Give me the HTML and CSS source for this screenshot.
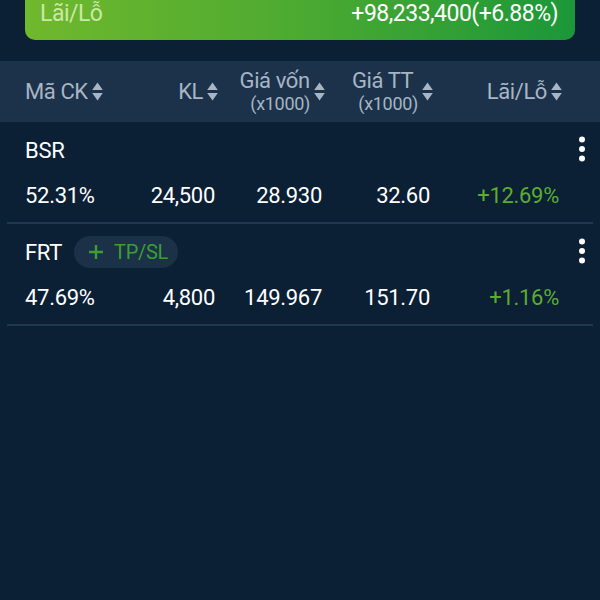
FILE: index.html
```html
<!DOCTYPE html>
<html lang="vi">
<head>
<meta charset="utf-8">
<title>Danh mục</title>
<link rel="stylesheet" href="styles.css">
</head>
<body>
<div class="banner">
  <span class="banner-label">Lãi/Lỗ</span>
  <span class="banner-value">+98,233,400(+6.88%)</span>
</div>

<div class="thead">
  <div class="th th-left"><span>Mã CK</span><svg class="sort" viewBox="0 0 11 19"><path d="M5.5 0.5 L10.8 8 H0.2 Z"/><path d="M5.5 18.5 L10.8 11 H0.2 Z"/></svg></div>
  <div class="th"><span>KL</span><svg class="sort" viewBox="0 0 11 19"><path d="M5.5 0.5 L10.8 8 H0.2 Z"/><path d="M5.5 18.5 L10.8 11 H0.2 Z"/></svg></div>
  <div class="th"><span class="two"><span>Giá vốn</span><small>(x1000)</small></span><svg class="sort" viewBox="0 0 11 19"><path d="M5.5 0.5 L10.8 8 H0.2 Z"/><path d="M5.5 18.5 L10.8 11 H0.2 Z"/></svg></div>
  <div class="th"><span class="two"><span>Giá TT</span><small>(x1000)</small></span><svg class="sort" viewBox="0 0 11 19"><path d="M5.5 0.5 L10.8 8 H0.2 Z"/><path d="M5.5 18.5 L10.8 11 H0.2 Z"/></svg></div>
  <div class="th"><span>Lãi/Lỗ</span><svg class="sort" viewBox="0 0 11 19"><path d="M5.5 0.5 L10.8 8 H0.2 Z"/><path d="M5.5 18.5 L10.8 11 H0.2 Z"/></svg></div>
</div>

<div class="row">
  <div class="name-line">
    <span class="sym">BSR</span>
    <svg class="kebab" viewBox="0 0 8 26"><circle cx="4" cy="3.5" r="3"/><circle cx="4" cy="13" r="3"/><circle cx="4" cy="22.5" r="3"/></svg>
  </div>
  <div class="vals">
    <span class="c1">52.31%</span>
    <span>24,500</span>
    <span>28.930</span>
    <span>32.60</span>
    <span class="up">+12.69%</span>
  </div>
</div>

<div class="row">
  <div class="name-line">
    <span class="sym">FRT</span>
    <span class="pill"><svg class="plus" viewBox="0 0 16 16"><path d="M8 1 V15 M1 8 H15"/></svg>TP/SL</span>
    <svg class="kebab" viewBox="0 0 8 26"><circle cx="4" cy="3.5" r="3"/><circle cx="4" cy="13" r="3"/><circle cx="4" cy="22.5" r="3"/></svg>
  </div>
  <div class="vals">
    <span class="c1">47.69%</span>
    <span>4,800</span>
    <span>149.967</span>
    <span>151.70</span>
    <span class="up">+1.16%</span>
  </div>
</div>
</body>
</html>
```

FILE: styles.css
```css
* { box-sizing: border-box; }
html, body {
  margin: 0;
  padding: 0;
  height: 100%;
}
body {
  background: #0b1f35;
  font-family: Roboto, "Noto Sans", "Liberation Sans", sans-serif;
  color: #ffffff;
  overflow: hidden;
}

.banner {
  margin: 0 25px;
  height: 40px;
  border-radius: 0 0 10px 10px;
  background: linear-gradient(90deg, #70b82d 0%, #4caa31 50%, #1b9739 100%);
  display: flex;
  justify-content: space-between;
  align-items: flex-start;
  padding: 0 17px 0 15px;
  font-size: 23px;
  line-height: 27px;
  letter-spacing: -0.5px;
}
.banner-label { color: #cbe8a6; }
.banner-value { color: #ffffff; }

.thead {
  margin-top: 21px;
  height: 61px;
  background: #1b324a;
  display: grid;
  grid-template-columns: 85px 108px 107px 108px 129px;
  padding: 0 38px 0 25px;
  align-items: center;
  color: #a7b5c4;
  font-size: 22px;
  letter-spacing: -0.4px;
}
.th {
  display: flex;
  align-items: center;
  justify-content: flex-end;
  gap: 4px;
}
.th-left { justify-content: flex-start; }
.two {
  display: flex;
  flex-direction: column;
  align-items: center;
  line-height: 24px;
  margin-top: 1px;
}
.two small {
  font-size: 18px;
  line-height: 22px;
  padding-left: 11px;
  letter-spacing: -0.3px;
}
.sort {
  width: 11px;
  height: 19px;
  fill: #a7b5c4;
  flex: none;
}

.row {
  margin: 0 7px;
  padding: 12px 0;
  border-bottom: 2px solid #1f3851;
}
.name-line {
  display: flex;
  align-items: center;
  height: 32px;
  padding: 0 7px 0 18px;
  font-size: 22px;
  letter-spacing: -0.3px;
}
.sym { margin-right: 12px; }
.kebab {
  width: 8px;
  height: 26px;
  fill: #ffffff;
  margin-left: auto;
  margin-top: -3px;
}
.pill {
  display: inline-flex;
  align-items: center;
  height: 32px;
  padding: 0 10px 0 14px;
  border-radius: 16px;
  background: #1b3148;
  color: #3c9e32;
  font-size: 20px;
  letter-spacing: -0.3px;
  gap: 10px;
}
.plus {
  width: 16px;
  height: 16px;
  stroke: #3c9e32;
  stroke-width: 2.4;
  fill: none;
}
.vals {
  margin-top: 14px;
  height: 30px;
  display: grid;
  grid-template-columns: 85px 105px 107px 108px 129px;
  padding-left: 18px;
  align-items: center;
  font-size: 22px;
  letter-spacing: -0.3px;
  text-align: right;
}
.vals .c1 { text-align: left; }
.up { color: #5aad2f; }
```
